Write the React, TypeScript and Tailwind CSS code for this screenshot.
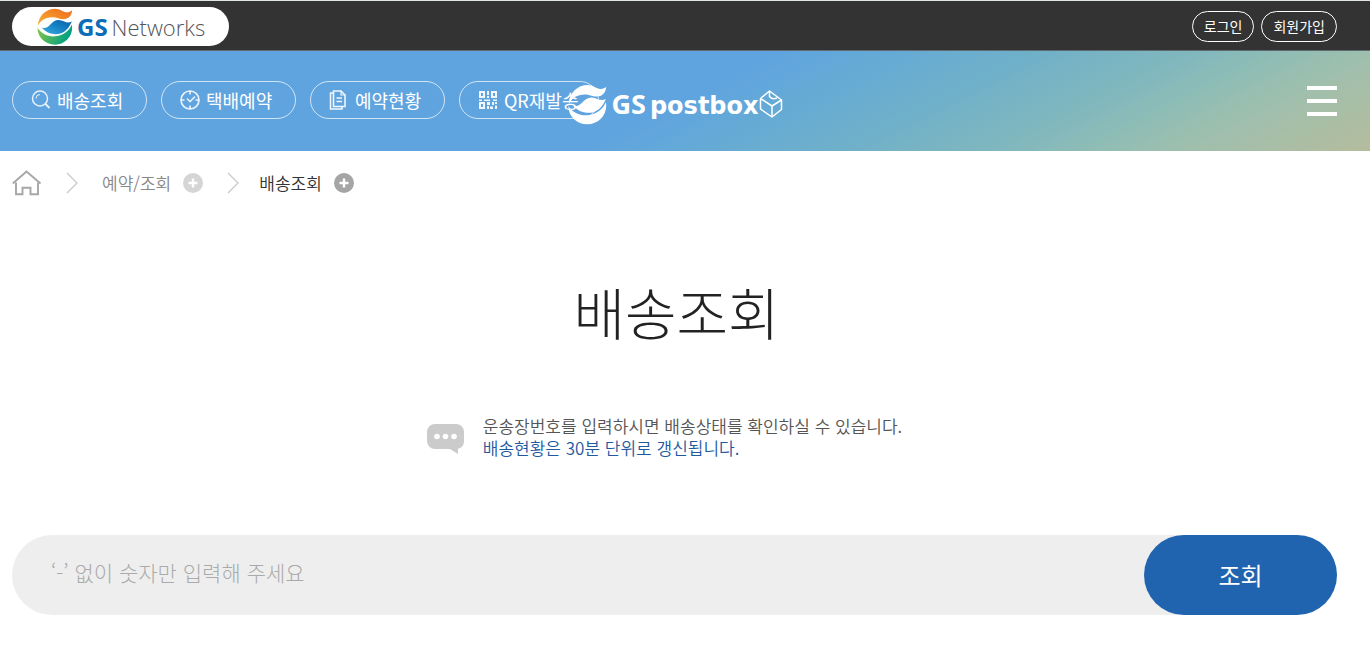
import React from 'react';

function Emblem({ className, mono = false }: { className: string; mono?: boolean }) {
  const top = mono ? '#fff' : 'url(#emblemTop)';
  const mid = mono ? '#fff' : 'url(#emblemMid)';
  const low = mono ? '#fff' : 'url(#emblemLow)';
  return (
    <svg viewBox="0 0 108 112" className={className} aria-hidden="true">
      {!mono && (
        <defs>
          <linearGradient id="emblemTop" x1="0" y1="1" x2="1" y2="0">
            <stop offset="0" stopColor="#f9b233" />
            <stop offset="1" stopColor="#ee6a1c" />
          </linearGradient>
          <linearGradient id="emblemMid" x1="0" y1="1" x2="1" y2="0">
            <stop offset="0" stopColor="#3fb0e0" />
            <stop offset="0.5" stopColor="#1683c6" />
            <stop offset="1" stopColor="#0a5da6" />
          </linearGradient>
          <linearGradient id="emblemLow" x1="0" y1="0" x2="1" y2="0.3">
            <stop offset="0" stopColor="#8cc63f" />
            <stop offset="1" stopColor="#00a184" />
          </linearGradient>
        </defs>
      )}
      <path fill={top} d="M2 54C4 22 28 2 54 2c16 0 22 9 34 11 8 1 13-2 18-6-2 18-12 27-27 27-12 0-19-6-33-6C26 28 10 38 2 54Z" />
      <path fill={mid} d="M14 59c10 4 18 0 26-9 8-8 16-15 29-13 14 2 20 11 36 4-8 17-17 32-37 37-20 4-42-3-54-19Z" />
      <path fill={low} d="M1 60c14 21 36 29 59 25 22-4 37-17 45-35 6 34-20 61-51 61C24 111 1 88 1 60Z" />
    </svg>
  );
}

function SearchIcon() {
  return (
    <svg viewBox="0 0 20 20" className="size-5" fill="none" stroke="#fff" strokeOpacity="0.85" aria-hidden="true">
      <circle cx="9" cy="8.500" r="7.500" strokeWidth="1.5" />
      <path d="M5 8.500a4 4 0 0 1 4-4" strokeWidth="1" />
      <path d="m14.500 14 4 4" strokeWidth="1.800" />
    </svg>
  );
}

function ClockIcon() {
  return (
    <svg viewBox="0 0 20 20" className="size-5" fill="none" stroke="#fff" strokeOpacity="0.85" aria-hidden="true">
      <circle cx="10" cy="10" r="9" strokeWidth="1.700" />
      <path d="M10 1v3.500M10 15.500V19M1 10h3.500M15.500 10H19" strokeWidth="1.700" />
      <path d="m7 8.500 3 3 5-5" strokeWidth="1.600" />
    </svg>
  );
}

function DocIcon() {
  return (
    <svg viewBox="0 0 20 20" className="size-5" fill="none" stroke="#fff" strokeOpacity="0.9" aria-hidden="true">
      <path d="M4.500 1h7.500l4 4v11.500H4.500Z" strokeWidth="1.600" />
      <path d="M4 3H1.500v16h11.500v-2.500M7.500 8h5.500M7.500 11.500h5.500" strokeWidth="1.500" />
      <path d="M12 1v4h4" strokeWidth="1.200" />
    </svg>
  );
}

function QrIcon() {
  return (
    <svg viewBox="0 0 20 20" className="size-5" fill="#fff" fillOpacity="0.9" aria-hidden="true">
      <path fillRule="evenodd" d="M1 1h6v7H1Zm2 2v3h2V3ZM13 1h6v7h-6Zm2 2v3h2V3ZM1 12h6v7H1Zm2 2v3h2v-3Z" />
      <path d="M9 1h2v4H9ZM9 6h2v2H9ZM1 9.500h3V11H1ZM6 9.500h6V11H6ZM15 9.500h4V11h-4ZM9 12h3v3H9ZM14 12h2v3h-2ZM17 12h2v2h-2ZM9 16h2v3H9ZM12 16.500h3V19h-3ZM17 15.500h2V19h-2Z" />
    </svg>
  );
}

function BoxIcon() {
  return (
    <svg viewBox="0 0 24 28" className="h-7 w-6" fill="none" stroke="#fff" strokeWidth="1.500" strokeLinejoin="round" aria-hidden="true">
      <path d="M10.500 1 22.500 10v9.500L13 27 1.500 19V8.500Z" />
      <path d="M1.500 8.500 13 16l9.500-6M13 16v11" />
      <path d="M10.500 1v5.500c2 2.500 4 3 7.500 1.500" />
    </svg>
  );
}

function HomeIcon() {
  return (
    <svg viewBox="0 0 30 26" className="h-[26px] w-[30px]" fill="none" stroke="#a6a6a6" strokeWidth="1.900" aria-hidden="true">
      <path d="M.8 13.500 14.500 1.500 28.500 13.500" />
      <path d="M4 12.500v11.700h6.500v-6.500h8v6.500H26V12.500" />
    </svg>
  );
}

function Chevron() {
  return (
    <svg viewBox="0 0 12 22" className="h-[22px] w-3" fill="none" stroke="#c9c9c9" strokeWidth="1.300" aria-hidden="true">
      <path d="m1 1 10 10L1 21" />
    </svg>
  );
}

function Plus({ color }: { color: string }) {
  return (
    <svg viewBox="0 0 20 20" className="size-5" aria-hidden="true">
      <circle cx="10" cy="10" r="10" fill={color} />
      <path d="M10 5.500v9M5.500 10h9" stroke="#fff" strokeWidth="2.400" />
    </svg>
  );
}

function SpeechIcon() {
  return (
    <svg viewBox="0 0 37 30" className="mt-1 h-[30px] w-[37px] shrink-0" aria-hidden="true">
      <path fill="#cbcbcb" d="M8 0h21a8 8 0 0 1 8 8v9a8 8 0 0 1-6 7.700V30l-8-5H8a8 8 0 0 1-8-8V8a8 8 0 0 1 8-8Z" />
      <g fill="#fff">
        <circle cx="10" cy="12.500" r="2.800" />
        <circle cx="18.500" cy="12.500" r="2.800" />
        <circle cx="27" cy="12.500" r="2.800" />
      </g>
    </svg>
  );
}

const menu = [
  { label: '배송조회', icon: <SearchIcon /> },
  { label: '택배예약', icon: <ClockIcon /> },
  { label: '예약현황', icon: <DocIcon /> },
  { label: 'QR재발송', icon: <QrIcon /> },
];

export default function App() {
  return (
    <div className="min-h-screen bg-white font-['Noto_Sans_CJK_KR',sans-serif] text-[#222]" lang="ko">
      <div className="flex h-[51px] items-center justify-between border-t border-b border-t-[#dfe5e2] border-b-[#5f6b70] bg-[#333] pt-0.5 pr-[33px] pl-3">
        <a href="#" aria-label="GS Networks" className="flex h-[39px] w-[217px] items-center gap-1 rounded-full bg-white pl-[25px] font-['Open_Sans',sans-serif] leading-none">
          <Emblem className="h-[37px] w-9" />
          <span className="flex items-baseline gap-1">
            <span className="text-2xl leading-none font-bold text-[#0b6db5]">GS</span>
            <span className="text-[22px] leading-none font-light text-[#555]">Networks</span>
          </span>
        </a>
        <div className="flex gap-[7px] text-sm text-white">
          <a href="#" className="flex h-[31px] items-center rounded-full border border-white px-[11px] pb-0.5">로그인</a>
          <a href="#" className="flex h-[31px] items-center rounded-full border border-white px-[11px] pb-0.5">회원가입</a>
        </div>
      </div>

      <header className="relative flex h-[100px] items-center justify-between bg-[linear-gradient(153deg,#60a4df_0%,#60a4df_50%,#63a9d8_55%,#6fb0c9_66%,#82b8bd_77%,#8fbdb5_82%,#9fbfad_88%,#b5bc9d_100%)] pr-[33px] pl-3">
        <div className="absolute inset-y-0 right-[33px] left-3 flex items-center justify-center">
          <a href="#" aria-label="GS postbox" className="mt-1.5 ml-0.5 flex items-center text-white">
            <Emblem mono className="h-[41px] w-[39px]" />
            <span className="ml-1 flex items-baseline gap-1">
              <span className="font-['Open_Sans',sans-serif] text-[27px] leading-none font-bold">GS</span>
              <span className="font-['DejaVu_Sans',sans-serif] text-2xl leading-none font-bold">postbox</span>
            </span>
            <BoxIcon />
          </a>
        </div>
        <nav className="relative mb-0.5 flex gap-[14px]">
          {menu.map((m) => (
            <a key={m.label} href="#" className="flex h-[38px] min-w-[135px] items-center gap-1.5 rounded-full border border-white/70 pr-5 pl-[18px] text-lg text-white">
              {m.icon}
              <span>{m.label}</span>
            </a>
          ))}
        </nav>
        <button type="button" aria-label="전체 메뉴" className="relative flex w-[30px] flex-col gap-[9px]">
          <span className="h-1 bg-white" />
          <span className="h-1 bg-white" />
          <span className="h-1 bg-white" />
        </button>
      </header>

      <main className="pr-[33px] pl-3">
        <nav aria-label="현재 위치" className="flex h-16 items-center text-[17px] font-[350]">
          <a href="#" aria-label="홈"><HomeIcon /></a>
          <span className="mx-6"><Chevron /></span>
          <a href="#" className="flex items-center gap-3 text-[#888]">예약/조회 <Plus color="#d5d5d5" /></a>
          <span className="mr-5 ml-6"><Chevron /></span>
          <a href="#" className="flex items-center gap-3 text-[#333]">배송조회 <Plus color="#a5a5a5" /></a>
        </nav>

        <h1 className="mt-14 pl-1 text-center text-[56px] leading-[80px] font-light">배송조회</h1>

        <div className="mt-16 flex items-center justify-center gap-[19px] pr-5 text-[17px] leading-[22px]">
          <SpeechIcon />
          <p className="font-[350] text-[#555]">
            운송장번호를 입력하시면 배송상태를 확인하실 수 있습니다.
            <br />
            <span className="text-[#1f5a9f]">배송현황은 30분 단위로 갱신됩니다.</span>
          </p>
        </div>

        <form className="mt-[76px] flex h-20 rounded-full bg-[#eee]" onSubmit={(e) => e.preventDefault()}>
          <input
            type="text"
            aria-label="운송장번호"
            placeholder="‘-’ 없이 숫자만 입력해 주세요"
            className="min-w-0 flex-1 bg-transparent pb-1 pl-[39px] text-[21px] font-light outline-none placeholder:text-[#aaa]"
          />
          <button type="submit" className="w-[193px] rounded-full bg-[#2064b0] text-2xl text-white">조회</button>
        </form>
      </main>
    </div>
  );
}
